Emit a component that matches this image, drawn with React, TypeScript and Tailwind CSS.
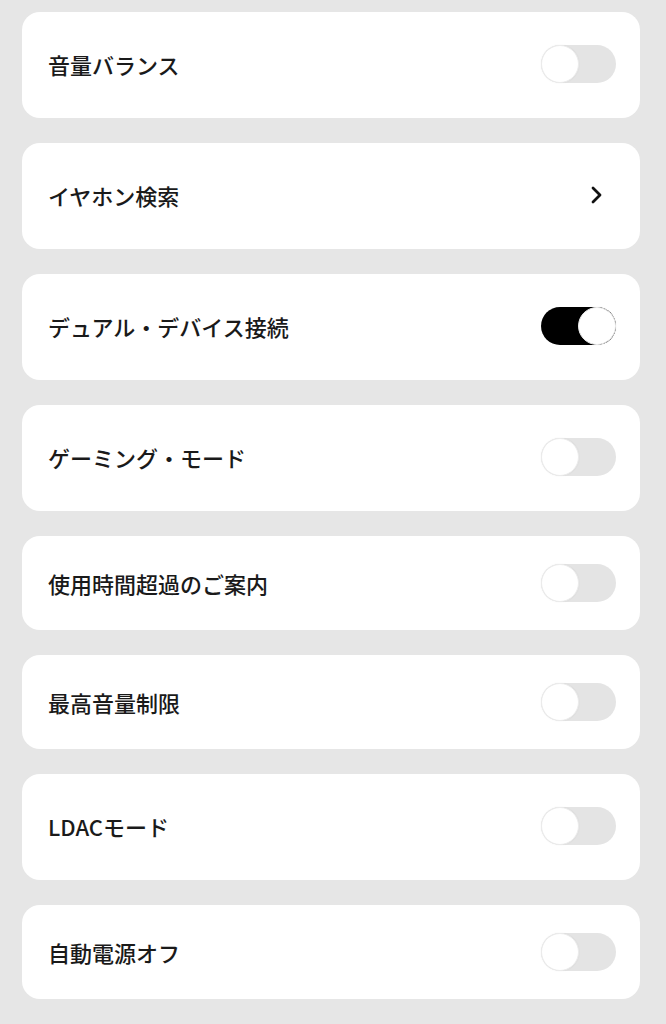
import React from "react";

type Row = {
  label: string;
  kind: "toggle" | "link";
  on?: boolean;
  tall?: boolean;
};

const rows: Row[] = [
  { label: "音量バランス", kind: "toggle", tall: true },
  { label: "イヤホン検索", kind: "link", tall: true },
  { label: "デュアル・デバイス接続", kind: "toggle", on: true, tall: true },
  { label: "ゲーミング・モード", kind: "toggle", tall: true },
  { label: "使用時間超過のご案内", kind: "toggle" },
  { label: "最高音量制限", kind: "toggle" },
  { label: "LDACモード", kind: "toggle", tall: true },
  { label: "自動電源オフ", kind: "toggle" },
  { label: "", kind: "link", tall: true },
];

function Toggle({ on }: { on?: boolean }) {
  return (
    <div
      className={
        on
          ? "flex h-[38px] w-[75px] items-center justify-end rounded-full bg-black"
          : "flex h-[38px] w-[75px] items-center justify-start rounded-full bg-[#e4e4e4]"
      }
    >
      <div className="h-[38px] w-[38px] rounded-full border border-[#ececec] bg-white shadow-[0_0_2px_rgba(0,0,0,0.06)]" />
    </div>
  );
}

function Chevron() {
  return (
    <svg width="14" height="20" viewBox="0 0 14 20" fill="none">
      <path d="M3 3l7 7-7 7" stroke="#111" strokeWidth="2.8" strokeLinecap="round" strokeLinejoin="round" />
    </svg>
  );
}

export default function App() {
  return (
    <div className="min-h-screen bg-[#e6e6e6] pl-[22px] pr-[26px] pt-[12px] pb-8 font-['Noto_Sans_CJK_JP','Noto_Sans',sans-serif]">
      <div className="flex flex-col gap-[25px]">
        {rows.map((r, i) => (
          <div
            key={i}
            className={
              r.tall
                ? "flex h-[106px] items-center justify-between rounded-[18px] bg-white pl-[26px] pr-[24px] pb-[2px]"
                : "flex h-[94px] items-center justify-between rounded-[18px] bg-white pl-[26px] pr-[24px]"
            }
          >
            <span className="text-[22px] font-medium leading-none text-[#1a1a1a]">{r.label}</span>
            {r.label && (r.kind === "toggle" ? <Toggle on={r.on} /> : <div className="mr-[12px]"><Chevron /></div>)}
          </div>
        ))}
      </div>
    </div>
  );
}
